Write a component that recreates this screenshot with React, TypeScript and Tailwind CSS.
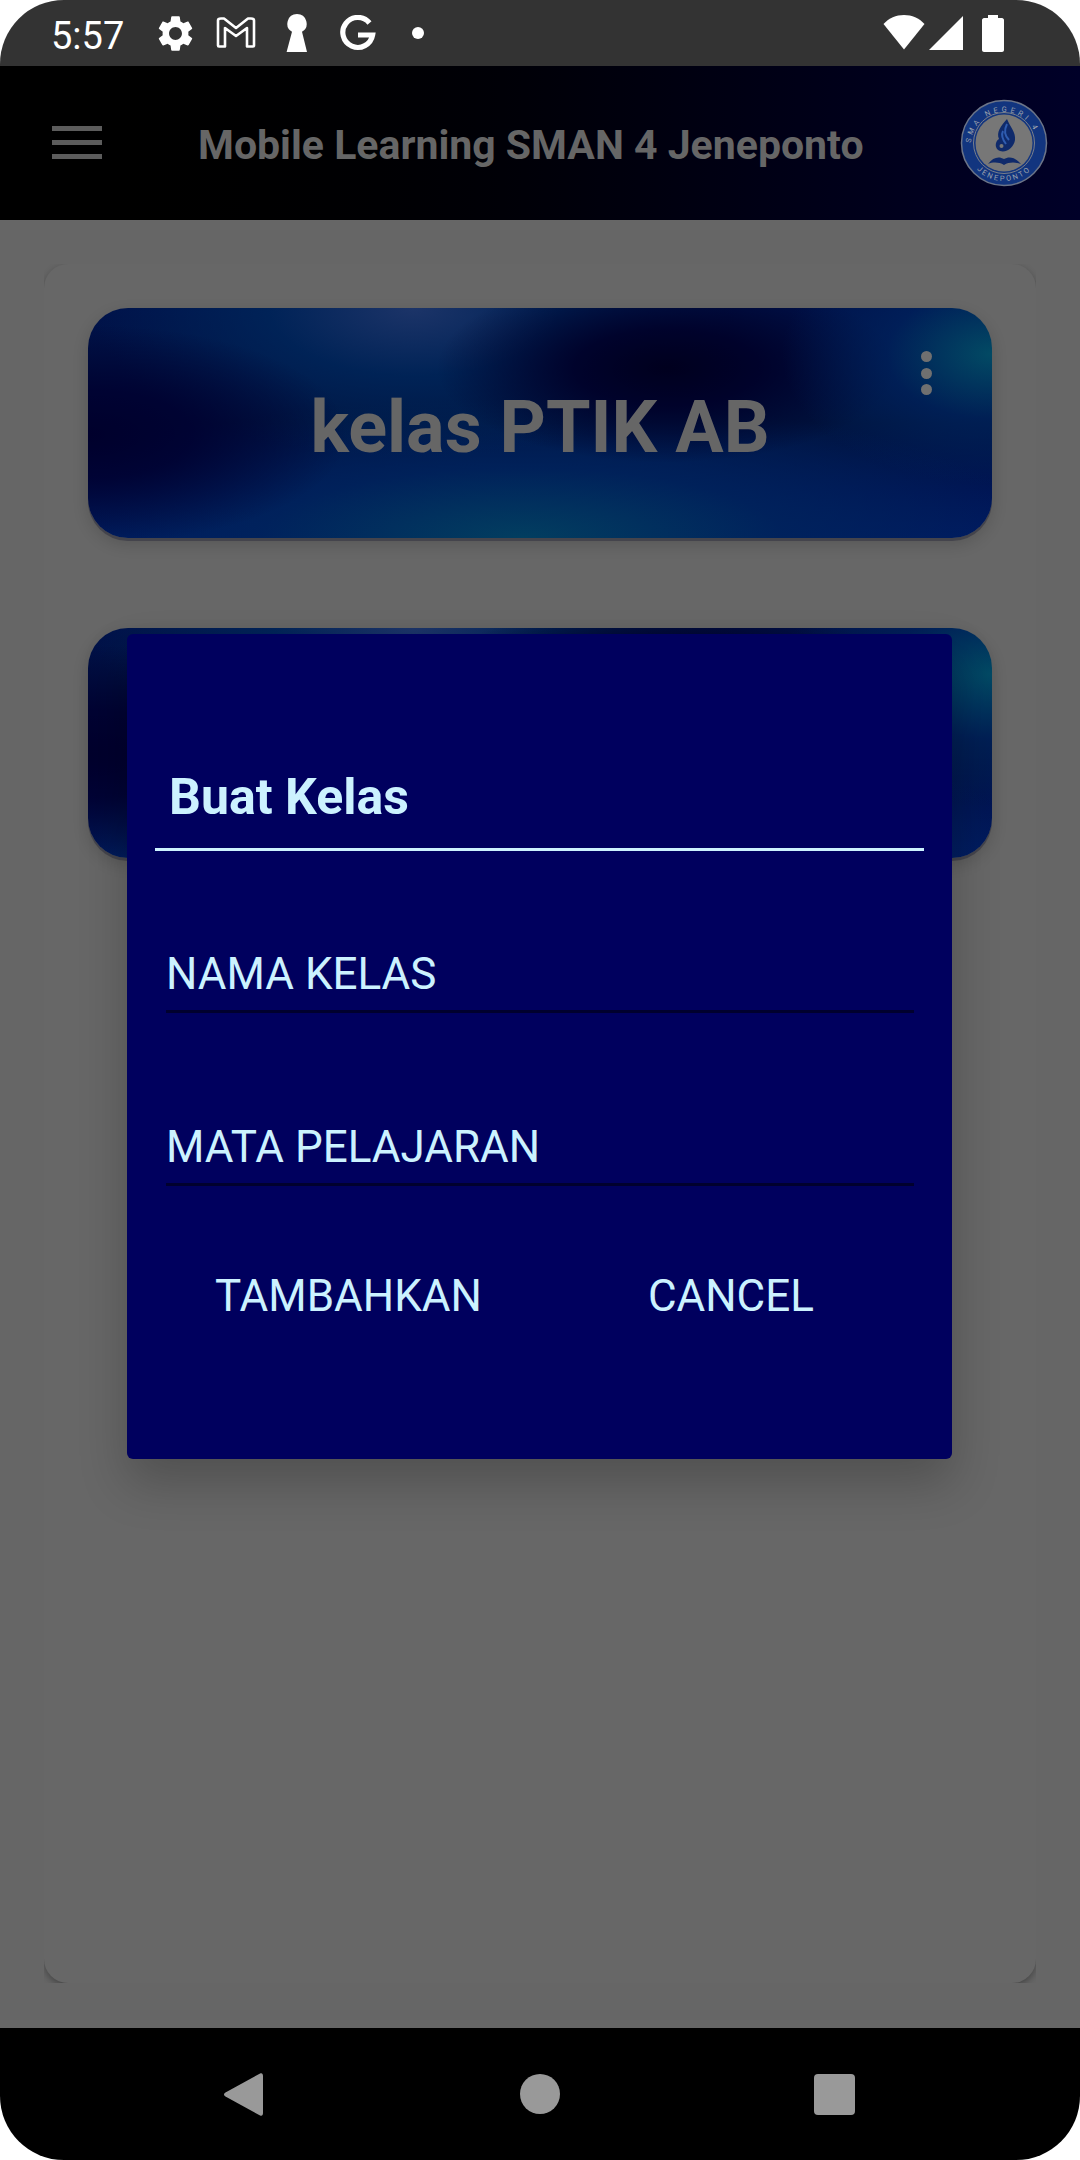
import React from 'react';

const cardBackground =
  'bg-[radial-gradient(ellipse_210px_130px_at_100%_20%,#024a64_0%,rgba(0,38,98,0.6)_50%,rgba(0,30,100,0)_100%),radial-gradient(ellipse_230px_95px_at_64%_26%,#00001e_0%,rgba(0,0,40,0.9)_40%,rgba(0,0,40,0)_100%),radial-gradient(ellipse_260px_110px_at_0%_55%,#00002c_0%,rgba(0,0,48,0.85)_40%,rgba(0,0,48,0)_100%),radial-gradient(ellipse_320px_150px_at_36%_0%,#1c3468_0%,rgba(0,40,92,0.75)_45%,rgba(0,40,92,0)_100%),radial-gradient(ellipse_520px_140px_at_48%_100%,#023e60_0%,rgba(0,36,92,0.8)_50%,rgba(0,32,96,0)_100%),linear-gradient(180deg,#00124a_0%,#00143f_50%,#001555_80%,#001a60_100%)]';

function StatusIcons() {
  return (
    <>
      <svg width="43" height="43" viewBox="0 0 24 24" fill="#fff" className="absolute left-[154px] top-[12px]">
        <path d="M19.14 12.94c.04-.3.06-.61.06-.94 0-.32-.02-.64-.07-.94l2.03-1.58c.18-.14.23-.41.12-.61l-1.92-3.32c-.12-.22-.37-.29-.59-.22l-2.39.96c-.5-.38-1.03-.7-1.62-.94l-.36-2.54c-.04-.24-.24-.41-.48-.41h-3.84c-.24 0-.43.17-.47.41l-.36 2.54c-.59.24-1.13.57-1.62.94l-2.39-.96c-.22-.08-.47 0-.59.22L2.74 8.87c-.12.21-.08.47.12.61l2.03 1.58c-.05.3-.09.63-.09.94s.02.64.07.94l-2.03 1.58c-.18.14-.23.41-.12.61l1.92 3.32c.12.22.37.29.59.22l2.39-.96c.5.38 1.03.7 1.62.94l.36 2.54c.05.24.24.41.48.41h3.84c.24 0 .44-.17.47-.41l.36-2.54c.59-.24 1.13-.56 1.62-.94l2.39.96c.22.08.47 0 .59-.22l1.92-3.32c.12-.22.07-.47-.12-.61l-2.01-1.58zM12 15.6c-1.98 0-3.6-1.62-3.6-3.6s1.62-3.6 3.6-3.6 3.6 1.62 3.6 3.6-1.62 3.6-3.6 3.6z" />
      </svg>
      <svg width="40" height="31" viewBox="0 0 40 31" fill="none" stroke="#fff" strokeWidth="2.6" strokeLinejoin="round" className="absolute left-[216px] top-[17px]">
        <path d="M2 3.5 C2 2 3.5 1.5 5 1.5 L8 1.5 L20 11 L32 1.5 L35 1.5 C36.5 1.5 38 2 38 3.5 L38 28.5 C38 29.2 37.5 29.5 37 29.5 L31 29.5 L31 11 L20 19 L9 11 L9 29.5 L3 29.5 C2.5 29.5 2 29.2 2 28.5 Z" />
      </svg>
      <svg width="22" height="38" viewBox="0 0 22 38" fill="#fff" className="absolute left-[286px] top-[14px]">
        <path d="M11 0 a9.6 9.6 0 0 1 5 17.8 L21 38 H0.6 L6 17.8 A9.6 9.6 0 0 1 11 0 Z" />
      </svg>
      <svg width="36" height="36" viewBox="0 0 36 36" fill="none" stroke="#fff" strokeWidth="5.2" className="absolute left-[340px] top-[15px]">
        <path d="M29.5 8 A15 15 0 1 0 32.6 20 L18 20" />
      </svg>
      <span className="absolute left-[412px] top-[27px] w-3 h-3 rounded-full bg-white" />
      <svg width="42" height="35" viewBox="0 0 42 35" fill="#fff" className="absolute left-[883px] top-[15px]">
        <path d="M21 0 C29 0 36 3 41.5 9 L21 34.5 L0.5 9 C6 3 13 0 21 0 Z" />
      </svg>
      <svg width="34" height="34" viewBox="0 0 34 34" fill="#fff" className="absolute left-[929px] top-[16px]">
        <path d="M34 0 V34 H0 Z" />
      </svg>
      <svg width="22" height="37" viewBox="0 0 22 37" fill="#fff" className="absolute left-[982px] top-[15px]">
        <path d="M6 0 H16 V3 H20 C21 3 22 4 22 5 V35 C22 36 21 37 20 37 H2 C1 37 0 36 0 35 V5 C0 4 1 3 2 3 H6 Z" />
      </svg>
    </>
  );
}

function SchoolLogo() {
  return (
    <svg width="88" height="88" viewBox="0 0 88 88" className="shrink-0">
      <defs>
        <path id="logo-top" d="M11 46 A33 33 0 0 1 77 46" />
        <path id="logo-bottom" d="M6 44 A38 38 0 0 0 82 44" />
      </defs>
      <circle cx="44" cy="44" r="42.5" fill="#12357f" stroke="#6b7488" strokeWidth="1.5" />
      <circle cx="44" cy="44" r="30.5" fill="none" stroke="#7a7f8a" strokeWidth="1" />
      <circle cx="44" cy="44" r="28.5" fill="#777777" />
      <text fill="#9aa0ad" fontSize="7.5" fontFamily="Roboto, sans-serif" letterSpacing="3.3">
        <textPath href="#logo-top" startOffset="2%">SMA NEGERI 4</textPath>
      </text>
      <text fill="#9aa0ad" fontSize="7.5" fontFamily="Roboto, sans-serif" letterSpacing="2" textAnchor="middle">
        <textPath href="#logo-bottom" startOffset="50%">JENEPONTO</textPath>
      </text>
      <path d="M47 20 C41 27 36 33 39 40 C35 42 34 50 40 52 C47 54 54 48 55 41 C56 33 50 28 47 20 Z" fill="#0f2a6b" />
      <path d="M47 25 C44 31 44 36 49 41 M43 32 C41 36 43 41 46 45" stroke="#2f5cb0" strokeWidth="2" fill="none" />
      <circle cx="41.5" cy="47" r="2" fill="#777777" />
      <path d="M28 65 C33 58 39 57 44 60 C49 57 55 58 61 65 C55 63 49 63 44 66 C39 63 33 63 28 65 Z" fill="#0f2a6b" />
    </svg>
  );
}

function ClassCard({ title }: { title?: string }) {
  return (
    <div className={`relative h-[230px] rounded-[40px] flex items-center justify-center shadow-[0_3px_0_#44444c,0_6px_16px_rgba(0,0,0,0.16)] ${cardBackground}`}>
      {title && <span className="mt-[10px] text-[72px] leading-none font-bold text-[#666666]">{title}</span>}
      <div className="absolute right-[60px] top-[43px] flex flex-col gap-[5.5px]">
        <span className="w-[11px] h-[11px] rounded-full bg-[#707070]" />
        <span className="w-[11px] h-[11px] rounded-full bg-[#707070]" />
        <span className="w-[11px] h-[11px] rounded-full bg-[#707070]" />
      </div>
    </div>
  );
}

function Field({ label }: { label: string }) {
  return (
    <div className="ml-[39px] w-[748px] h-[64px] border-b-[3px] border-[#00002e] text-[44px] leading-[50px] text-[#ccf2ff]">
      {label}
    </div>
  );
}

export default function App() {
  return (
    <div className="relative w-[1080px] h-[2160px] bg-white font-['Roboto',sans-serif]">
      <div className="relative w-full h-full flex flex-col overflow-hidden rounded-[64px]">
        <div className="relative h-[66px] shrink-0 bg-[#333333]">
          <span className="absolute left-[51px] top-[14px] text-[38px] leading-[44px] text-white">5:57</span>
          <StatusIcons />
        </div>

        <header className="h-[154px] shrink-0 flex items-center pl-[52px] pr-[32px] bg-gradient-to-r from-black to-[#000028]">
          <div className="flex flex-col gap-[9px] w-[50px] mt-[-2px]">
            <span className="h-[5px] bg-[#5c5c5c]" />
            <span className="h-[5px] bg-[#5c5c5c]" />
            <span className="h-[5px] bg-[#5c5c5c]" />
          </div>
          <h1 className="ml-[96px] mt-[4px] flex-1 text-[41px] leading-none font-bold text-[#666666]">Mobile Learning SMAN 4 Jeneponto</h1>
          <SchoolLogo />
        </header>

        <main className="flex-1 flex flex-col bg-[#666666] pt-[44px] pb-[45px] px-[44px]">
          <div className="flex-1 flex overflow-hidden">
            <div className="flex-1 flex flex-col gap-[90px] rounded-[24px] bg-[#676767] pt-[44px] px-[44px] shadow-[0_3px_7px_rgba(0,0,0,0.32)]">
              <ClassCard title="kelas PTIK AB" />
              <ClassCard />
            </div>
          </div>
        </main>

        <nav className="h-[132px] shrink-0 bg-black flex items-start pl-[224px] pt-[44px]">
          <svg width="39" height="45" viewBox="0 0 40 44" fill="#999999">
            <path d="M37 0.5 C39 -0.5 40 1 40 3 V41 C40 43 39 44.5 37 43.5 L1.5 24 C-0.5 23 -0.5 21 1.5 20 Z" />
          </svg>
          <span className="ml-[257px] mt-[2px] w-[40px] h-[40px] rounded-full bg-[#999999]" />
          <span className="ml-[254px] mt-[2px] w-[41px] h-[41px] rounded-[4px] bg-[#999999]" />
        </nav>
      </div>

      <section className="absolute left-[127px] top-[634px] w-[825px] h-[825px] rounded-[6px] bg-[#00005e] shadow-[0_24px_48px_rgba(0,0,0,0.22)] flex flex-col">
        <h2 className="ml-[42px] mt-[134px] h-[58px] text-[50px] leading-[58px] font-bold text-[#ccf2ff]">Buat Kelas</h2>
        <div className="ml-[28px] mt-[22px] w-[769px] h-[3px] bg-[#ccf2ff]" />
        <div className="mt-[98px]">
          <Field label="NAMA KELAS" />
        </div>
        <div className="mt-[109px]">
          <Field label="MATA PELAJARAN" />
        </div>
        <div className="mt-[85px] flex text-[44px] leading-[50px] text-[#ccf2ff]">
          <button type="button" className="ml-[88px]">TAMBAHKAN</button>
          <button type="button" className="ml-[166px]">CANCEL</button>
        </div>
      </section>
    </div>
  );
}
